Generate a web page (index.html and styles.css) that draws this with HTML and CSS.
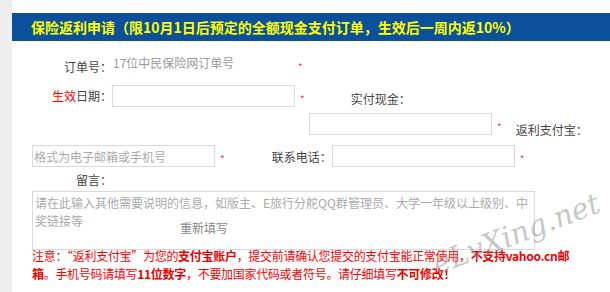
FILE: index.html
```html
<!DOCTYPE html>
<html lang="zh-CN">
<head>
    <meta charset="UTF-8">
    <meta name="viewport" content="width=device-width, initial-scale=1.0">
    <title>保险返利申请</title>
    <link rel="stylesheet" href="styles.css">
</head>
<body>
    <div id="page">
        <div class="title">保险返利申请（限10月1日后预定的全额现金支付订单，生效后一周内返10%）</div>

        <form id="rebate">
            <div class="row row-1">
                <label class="label">订单号：</label>
                <input class="field plain" type="text" placeholder="17位中民保险网订单号">
                <span class="star star-1">*</span>
            </div>

            <div class="row row-2">
                <label class="label"><span class="hot">生效</span>日期：</label>
                <input class="field" type="text">
                <span class="star">*</span>
                <label class="label label-cash">实付现金：</label>
            </div>

            <div class="row row-3">
                <input class="field field-cash" type="text">
                <span class="star">*</span>
                <label class="label label-alipay">返利支付宝：</label>
            </div>

            <div class="row row-4">
                <input class="field" type="text" placeholder="格式为电子邮箱或手机号">
                <span class="star">*</span>
                <label class="label label-phone">联系电话：</label>
                <input class="field" type="text">
                <span class="star">*</span>
            </div>

            <div class="row row-5">
                <label class="label">留言：</label>
            </div>

            <div class="memo">
                <textarea class="memo-box" placeholder="请在此输入其他需要说明的信息，如版主、E旅行分舵QQ群管理员、大学一年级以上级别、中奖链接等"></textarea>
                <button class="reset" type="reset">重新填写</button>
            </div>

            <p class="notice">
                注意：“返利支付宝”为您的<b>支付宝账户</b>，提交前请确认您提交的支付宝能正常使用，<b>不支持vahoo.cn邮<br>箱</b>。手机号码请填写<b>11位数字</b>，不要加国家代码或者符号。请仔细填写<b>不可修改！</b>
            </p>
        </form>

        <div class="watermark">eLvXing.net</div>
    </div>
</body>
</html>
```

FILE: styles.css
```css
body {
    margin: 0;
    background-color: #eeeeee;
    font-family: "Noto Sans CJK SC", "Microsoft YaHei", sans-serif;
    font-size: 12px;
    color: #444;
}

#page {
    position: relative;
    margin-left: 12px;
    min-height: 100vh;
    background-color: #fff;
    overflow: hidden;
}

.title {
    margin-top: 13px;
    height: 28px;
    line-height: 28px;
    padding-left: 19px;
    background-color: #0c4f9a;
    color: #ffff00;
    font-size: 14px;
    font-weight: bold;
    white-space: nowrap;
}

#rebate {
    padding-left: 20px;
}

.row {
    display: flex;
    align-items: center;
    height: 22px;
}

.row-1 { margin-top: 12px; }
.row-2 { margin-top: 10px; }
.row-3 { margin-top: 6px; }
.row-4 { margin-top: 10px; }
.row-5 { margin-top: 5px; height: 16px; }

.label {
    width: 80px;
    text-align: right;
    white-space: nowrap;
    line-height: 16px;
}

.hot {
    color: #f00;
}

.row-1 .label {
    padding-top: 5px;
}

.field {
    box-sizing: border-box;
    width: 183px;
    height: 22px;
    margin: 0;
    padding: 0 1px;
    border: 1px solid #d9d9d9;
    font: inherit;
    color: #444;
    outline: none;
}

.field.plain {
    border: none;
    padding-bottom: 4px;
}

.field::placeholder,
.memo-box::placeholder {
    color: #aaa;
}

.field.plain::placeholder {
    color: #999;
}

.star {
    margin-left: 5px;
    padding-top: 4px;
    color: #f36;
    font-size: 10px;
}

.star-1 {
    margin-left: 3px;
}

.label-cash {
    margin-left: 26px;
    padding-top: 6px;
}

.field-cash {
    margin-left: 277px;
}

.label-alipay {
    margin-left: 6px;
    padding-top: 12px;
}

.label-phone {
    margin-left: 27px;
    padding-top: 2px;
}

.memo {
    position: relative;
    margin-top: 3px;
    width: 503px;
    height: 59px;
}

.memo-box {
    box-sizing: border-box;
    display: block;
    width: 503px;
    height: 59px;
    margin: 0;
    padding: 2px 2px;
    border: 1px solid #d9d9d9;
    font: inherit;
    line-height: 18px;
    resize: none;
    outline: none;
}

.reset {
    position: absolute;
    left: 148px;
    top: 28px;
    padding: 0;
    border: none;
    background: none;
    font: inherit;
    color: #888;
    cursor: pointer;
}

.notice {
    margin: -3px 0 0;
    line-height: 18px;
    color: #f00;
    white-space: nowrap;
    letter-spacing: -0.3px;
}

.notice b {
    color: #e00;
}

.watermark {
    position: absolute;
    left: 428px;
    top: 246px;
    font-family: "DejaVu Serif", serif;
    font-style: italic;
    font-size: 29px;
    line-height: 36px;
    color: rgba(150, 150, 150, 0.55);
    transform: rotate(-21deg);
    transform-origin: left bottom;
    pointer-events: none;
}
```
